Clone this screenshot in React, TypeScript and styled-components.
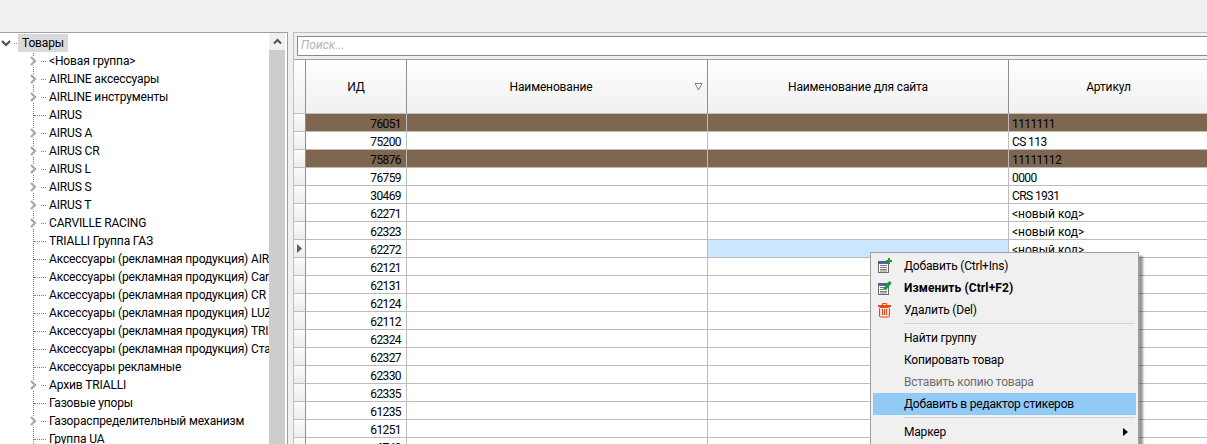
import React from 'react';
import styled, { createGlobalStyle } from 'styled-components';

const GlobalStyle = createGlobalStyle`
  html, body {
    margin: 0;
    padding: 0;
    background: #f0f0f0;
    overflow: hidden;
  }
  body {
    font-family: Roboto, "Noto Sans", sans-serif;
    font-size: 12px;
    color: #000;
  }
`;

const Window = styled.div`
  position: relative;
  width: 1207px;
  height: 444px;
  overflow: hidden;
  display: flex;
  flex-direction: column;
`;

const TopBar = styled.div`
  height: 32px;
  flex: none;
  background: #f0f0f0;
`;

const Body = styled.div`
  flex: 1;
  min-height: 0;
  display: flex;
  gap: 5px;
`;

const TreePanel = styled.div`
  width: 288px;
  flex: none;
  box-sizing: border-box;
  display: flex;
  background: #fff;
  border: 1px solid #a0a0a0;
  border-left: none;
  border-bottom: none;
`;

const TreeList = styled.div`
  flex: 1;
  min-width: 0;
  padding-top: 1px;
  overflow: hidden;
  position: relative;
  letter-spacing: -0.15px;
`;

const TreeRow = styled.div<{ $indent: number }>`
  position: relative;
  height: 18px;
  display: flex;
  align-items: center;
  padding-left: ${({ $indent }) => $indent}px;
  white-space: nowrap;
  line-height: 18px;
`;

const Expander = styled.svg<{ $wide?: boolean }>`
  width: ${({ $wide }) => ($wide ? 10 : 7)}px;
  height: ${({ $wide }) => ($wide ? 9 : 10)}px;
  flex: none;
  background: #fff;
`;

const Dots = styled.span<{ $width: number; $gap: number; $after?: number }>`
  width: ${({ $width }) => $width}px;
  margin-left: ${({ $gap }) => $gap}px;
  margin-right: ${({ $after }) => $after ?? 3}px;
  flex: none;
  border-top: 1px dotted #808080;
`;

const VerticalGuide = styled.div`
  position: absolute;
  left: 33px;
  top: 20px;
  bottom: 0;
  border-left: 1px dotted #808080;
`;

const RootLabel = styled.span`
  background: #d9d9d9;
  padding: 0 4px;
  height: 18px;
`;

const ScrollBar = styled.div`
  width: 16px;
  flex: none;
  margin-right: 2px;
  display: flex;
  flex-direction: column;
  background: #cdcdcd;
`;

const ScrollButton = styled.div`
  height: 17px;
  background: #f0f0f0;
  display: flex;
  align-items: center;
  justify-content: center;
`;

const ScrollArrow = styled.svg`
  width: 9px;
  height: 9px;
`;

const RightPanel = styled.div`
  flex: 1;
  min-width: 0;
  display: flex;
  flex-direction: column;
  overflow: hidden;
  background: #fff;
  border-top: 1px solid #c0c0c0;
  border-left: 1px solid #c0c0c0;
`;

const SearchRow = styled.div`
  flex: none;
  height: 26px;
  box-sizing: border-box;
  padding: 3px 0 0 3px;
  background: #f0f0f0;
`;

const SearchInput = styled.div`
  height: 20px;
  box-sizing: border-box;
  background: #fff;
  border: 1px solid #8a8a8a;
  border-right: none;
  padding-left: 3px;
  line-height: 16px;
  font-style: italic;
  color: #b4b4b4;
`;

const Grid = styled.div`
  flex: 1;
  display: grid;
  grid-template-columns: 12px 101px 301px 301px 200px;
  grid-template-rows: 55px;
  grid-auto-rows: 18px;
  align-content: start;
  background: #fff;
`;

const HeaderCell = styled.div<{ $sorted?: boolean }>`
  position: relative;
  box-sizing: border-box;
  display: flex;
  align-items: center;
  justify-content: center;
  padding-right: ${({ $sorted }) => ($sorted ? 12 : 0)}px;
  letter-spacing: -0.15px;
  background: linear-gradient(#ffffff, #f0f0f0);
  border-right: 1px solid #8f8f8f;
  border-top: 1px solid #a0a0a0;
  border-bottom: 1px solid #c0c0c0;
`;

const SortMark = styled.svg`
  position: absolute;
  right: 4px;
  top: 22px;
  width: 9px;
  height: 9px;
`;

const Gutter = styled.div`
  box-sizing: border-box;
  display: flex;
  align-items: center;
  padding-left: 3px;
  background: linear-gradient(#fcfcfc, #ececec);
  border-right: 1px solid #8f8f8f;
  border-bottom: 1px solid #bcbcbc;
`;

const Cell = styled.div<{ $tone?: 'brown' | 'active'; $align?: 'right'; $tight?: boolean }>`
  box-sizing: border-box;
  padding: 2px ${({ $align }) => ($align ? 5 : 3)}px 0 3px;
  line-height: 16px;
  white-space: nowrap;
  overflow: hidden;
  letter-spacing: ${({ $tight }) => ($tight ? '-0.6px' : 'normal')};
  text-align: ${({ $align }) => $align ?? 'left'};
  background: ${({ $tone }) =>
    $tone === 'brown' ? '#7f674f' : $tone === 'active' ? '#cce6ff' : '#fff'};
  border-right: 1px solid #bcbcbc;
  border-bottom: 1px solid #bcbcbc;
`;

const Menu = styled.div`
  position: absolute;
  left: 870px;
  top: 252px;
  width: 269px;
  height: 200px;
  box-sizing: border-box;
  padding: 2px;
  background: #f0f0f0;
  border: 1px solid #a0a0a0;
  box-shadow: 4px 4px 2px rgba(0, 0, 0, 0.4);
`;

const MenuItem = styled.div<{ $bold?: boolean; $disabled?: boolean; $hot?: boolean }>`
  position: relative;
  height: 22px;
  display: flex;
  align-items: center;
  letter-spacing: ${({ $bold }) => ($bold ? '0.1px' : '-0.2px')};
  font-weight: ${({ $bold }) => ($bold ? 700 : 400)};
  color: ${({ $disabled }) => ($disabled ? '#6d6d6d' : '#000')};
  background: ${({ $hot }) => ($hot ? '#91c9f7' : 'transparent')};
`;

const MenuIcon = styled.span`
  width: 27px;
  padding-left: 4px;
  flex: none;
  display: flex;
`;

const MenuSeparator = styled.div`
  height: 1px;
  margin: 2px 1px 3px 31px;
  background: #d4d4d4;
`;

const SubmenuArrow = styled.svg`
  position: absolute;
  right: 8px;
  top: 7px;
  width: 5px;
  height: 8px;
`;

const TREE: { name: string; children?: boolean }[] = [
  { name: '<Новая группа>', children: true },
  { name: 'AIRLINE аксессуары', children: true },
  { name: 'AIRLINE инструменты', children: true },
  { name: 'AIRUS' },
  { name: 'AIRUS A', children: true },
  { name: 'AIRUS CR', children: true },
  { name: 'AIRUS L', children: true },
  { name: 'AIRUS S', children: true },
  { name: 'AIRUS T', children: true },
  { name: 'CARVILLE RACING', children: true },
  { name: 'TRIALLI Группа ГАЗ' },
  { name: 'Аксессуары (рекламная продукция) AIRLINE' },
  { name: 'Аксессуары (рекламная продукция) Carville' },
  { name: 'Аксессуары (рекламная продукция) CR' },
  { name: 'Аксессуары (рекламная продукция) LUZAR' },
  { name: 'Аксессуары (рекламная продукция) TRIALLI' },
  { name: 'Аксессуары (рекламная продукция) Старт' },
  { name: 'Аксессуары рекламные' },
  { name: 'Архив TRIALLI', children: true },
  { name: 'Газовые упоры' },
  { name: 'Газораспределительный механизм', children: true },
  { name: 'Группа UA' },
];

const ROWS: { id: string; code?: string; brown?: boolean; current?: boolean }[] = [
  { id: '76051', code: '1111111', brown: true },
  { id: '75200', code: 'CS 113' },
  { id: '75876', code: '11111112', brown: true },
  { id: '76759', code: '0000' },
  { id: '30469', code: 'CRS 1931' },
  { id: '62271', code: '<новый код>' },
  { id: '62323', code: '<новый код>' },
  { id: '62272', code: '<новый код>', current: true },
  { id: '62121' },
  { id: '62131' },
  { id: '62124' },
  { id: '62112' },
  { id: '62324' },
  { id: '62327' },
  { id: '62330' },
  { id: '62335' },
  { id: '61235' },
  { id: '61251' },
  { id: '6743' },
];

const AddIcon = () => (
  <svg width="16" height="16" viewBox="0 0 16 16">
    <rect x="1" y="3" width="10" height="3" fill="#4656c4" />
    <rect x="1.5" y="5.5" width="10" height="9" fill="#fff" stroke="#6a6a6a" />
    <path d="M3 7.5h7M3 9.5h7M3 11.5h7M3 13h7" stroke="#7c7c7c" />
    <path d="M12 0v6M9 3h6" stroke="#12a02a" strokeWidth="2" />
  </svg>
);

const EditIcon = () => (
  <svg width="16" height="16" viewBox="0 0 16 16">
    <rect x="1" y="3" width="10" height="3" fill="#4656c4" />
    <rect x="1.5" y="5.5" width="10" height="9" fill="#fff" stroke="#6a6a6a" />
    <path d="M3 7.5h4M3 9.5h4M3 11.5h7M3 13h7" stroke="#7c7c7c" />
    <path d="M7.5 9.5 L13.5 2" stroke="#12a02a" strokeWidth="3.2" />
  </svg>
);

const TrashIcon = () => (
  <svg width="16" height="16" viewBox="0 0 16 16">
    <path d="M5.5 3V1.5h4V3" fill="none" stroke="#e5481c" />
    <path d="M1 4h13" stroke="#e5481c" strokeWidth="2" />
    <rect x="2.5" y="5.5" width="10" height="9.5" rx="1" fill="#fde0d2" stroke="#e5481c" />
    <path d="M5.5 7v6M7.5 7v6M9.5 7v6" stroke="#e5481c" />
  </svg>
);

export default function App() {
  return (
    <Window>
      <GlobalStyle />
      <TopBar />
      <Body>
        <TreePanel>
          <TreeList>
            <VerticalGuide />
            <TreeRow $indent={1}>
              <Expander $wide viewBox="0 0 10 9">
                <path d="M1 2 L5 6 L9 2" fill="none" stroke="#505050" strokeWidth="2.2" />
              </Expander>
              <Dots $width={5} $gap={3} $after={-1} />
              <RootLabel>Товары</RootLabel>
            </TreeRow>
            {TREE.map((item) => (
              <TreeRow key={item.name} $indent={item.children ? 30 : 34}>
                {item.children && (
                  <Expander viewBox="0 0 7 10">
                    <path d="M1 1 L5 5 L1 9" fill="none" stroke="#a8a8a8" strokeWidth="2.2" />
                  </Expander>
                )}
                <Dots $width={item.children ? 5 : 12} $gap={item.children ? 4 : 0} />
                {item.name}
              </TreeRow>
            ))}
          </TreeList>
          <ScrollBar>
            <ScrollButton>
              <ScrollArrow viewBox="0 0 9 9">
                <path d="M1 6.5 L4.5 3 L8 6.5" fill="none" stroke="#505050" strokeWidth="2" />
              </ScrollArrow>
            </ScrollButton>
          </ScrollBar>
        </TreePanel>
        <RightPanel>
          <SearchRow>
            <SearchInput>Поиск...</SearchInput>
          </SearchRow>
          <Grid>
            <HeaderCell />
            <HeaderCell>ИД</HeaderCell>
            <HeaderCell $sorted>
              Наименование
              <SortMark viewBox="0 0 9 9">
                <path d="M1 1.5 H8 L4.5 8 Z" fill="none" stroke="#808080" />
              </SortMark>
            </HeaderCell>
            <HeaderCell>Наименование для сайта</HeaderCell>
            <HeaderCell>Артикул</HeaderCell>
            {ROWS.map((row) => (
              <React.Fragment key={row.id}>
                <Gutter>
                  {row.current && (
                    <svg width="5" height="9" viewBox="0 0 5 9">
                      <path d="M0 0 L5 4.5 L0 9 Z" fill="#606060" />
                    </svg>
                  )}
                </Gutter>
                <Cell $align="right" $tight $tone={row.brown ? 'brown' : undefined}>{row.id}</Cell>
                <Cell $tone={row.brown ? 'brown' : undefined} />
                <Cell $tone={row.brown ? 'brown' : row.current ? 'active' : undefined} />
                <Cell $tight={!row.code?.startsWith('<')} $tone={row.brown ? 'brown' : undefined}>
                  {row.code}
                </Cell>
              </React.Fragment>
            ))}
          </Grid>
        </RightPanel>
      </Body>
      <Menu>
        <MenuItem>
          <MenuIcon><AddIcon /></MenuIcon>
          Добавить (Ctrl+Ins)
        </MenuItem>
        <MenuItem $bold>
          <MenuIcon><EditIcon /></MenuIcon>
          Изменить (Ctrl+F2)
        </MenuItem>
        <MenuItem>
          <MenuIcon><TrashIcon /></MenuIcon>
          Удалить (Del)
        </MenuItem>
        <MenuSeparator />
        <MenuItem><MenuIcon />Найти группу</MenuItem>
        <MenuItem><MenuIcon />Копировать товар</MenuItem>
        <MenuItem $disabled><MenuIcon />Вставить копию товара</MenuItem>
        <MenuItem $hot><MenuIcon />Добавить в редактор стикеров</MenuItem>
        <MenuSeparator />
        <MenuItem>
          <MenuIcon />
          Маркер
          <SubmenuArrow viewBox="0 0 5 8">
            <path d="M0 0 L5 4 L0 8 Z" fill="#000" />
          </SubmenuArrow>
        </MenuItem>
      </Menu>
    </Window>
  );
}
